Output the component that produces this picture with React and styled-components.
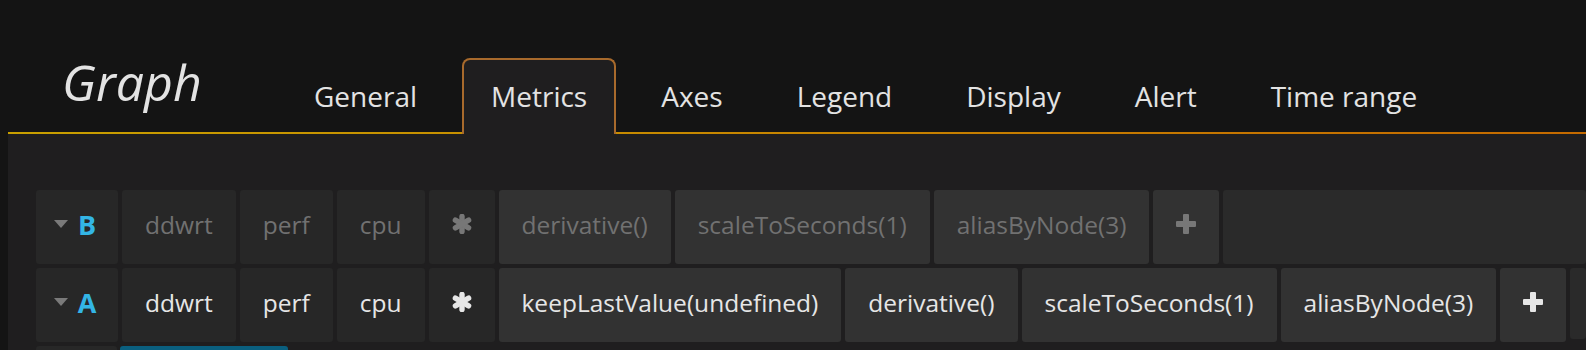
import React from "react";
import styled, { createGlobalStyle, css } from "styled-components";

const GlobalStyle = createGlobalStyle`
  html, body {
    margin: 0;
    padding: 0;
    overflow: hidden;
    background: #141414;
  }
  body {
    font-family: "Open Sans", "Liberation Sans", sans-serif;
  }
`;

const Page = styled.div`
  height: 100vh;
  overflow: hidden;
  padding-left: 8px;
  box-sizing: border-box;
  background: #141414;
`;

const Header = styled.div`
  display: flex;
  align-items: flex-end;
  height: 134px;
  background: linear-gradient(to right, #c9a000, #c46a00) left bottom / 100% 2px no-repeat;
`;

const Title = styled.div`
  flex: 0 0 269px;
  box-sizing: border-box;
  align-self: flex-start;
  margin-top: 48px;
  padding-left: 54px;
  font-size: 50px;
  font-style: italic;
  color: #e3e3e3;
  line-height: normal;
`;

const Tabs = styled.div`
  display: flex;
  align-items: flex-end;
`;

const Tab = styled.div`
  box-sizing: border-box;
  height: 74px;
  margin: 0 8px 2px;
  padding: 17px 27px 0;
  border: 2px solid transparent;
  border-bottom: 0;
  border-radius: 8px 8px 0 0;
  font-size: 28px;
  line-height: 38px;
  color: #e3e3e3;
  white-space: nowrap;

  ${({ $active }) =>
    $active &&
    css`
      height: 76px;
      margin-bottom: 0;
      border-color: #a86a2c;
      background: #1f1e1f;
    `}
`;

const Panel = styled.div`
  background: #1f1e1f;
  padding: 56px 0 0 28px;
  min-height: 260px;
  overflow: hidden;
`;

const Row = styled.div`
  display: flex;
  gap: ${({ $gap }) => $gap || 4}px;
  height: 74px;
  margin-bottom: 4px;
`;

const Cell = styled.div`
  flex-shrink: 0;
  box-sizing: border-box;
  display: flex;
  align-items: center;
  justify-content: center;
  height: 100%;
  padding: 0 23px 6px;
  border-radius: 3px;
  background: ${({ $func }) => ($func ? "#323232" : "#272727")};
  color: ${({ $dim }) => ($dim ? "#717171" : "#e6e6e6")};
  font-size: 24.5px;
  line-height: normal;
  white-space: nowrap;
`;

const RefCell = styled.div`
  flex: 0 0 ${({ $w }) => $w || 82}px;
  box-sizing: border-box;
  display: flex;
  align-items: center;
  height: 100%;
  padding: 0 0 6px 18px;
  border-radius: 3px;
  background: #272727;
`;

const RefLetter = styled.span`
  width: 20px;
  margin-left: 9px;
  text-align: center;
  font-size: 27px;
  font-weight: 700;
  color: #33b5e5;
  line-height: normal;
`;

const Filler = styled.div`
  flex: 1 1 auto;
  min-width: 0;
  height: ${({ $short }) => ($short ? "71px" : "100%")};
  border-radius: 3px;
  background: #2a2a2a;
`;

const AddButton = styled.div`
  flex: 0 0 168px;
  height: 100%;
  border-radius: 3px;
  background: #0a5f7f;
`;

const Caret = () => (
  <svg width="14" height="8" viewBox="0 0 14 8">
    <polygon points="0,0 14,0 7,8" fill="#7a7a7a" />
  </svg>
);

const Asterisk = ({ color }) => (
  <svg width="20" height="20" viewBox="-10 -10 20 20">
    {[90, 30, 150].map((a) => (
      <line
        key={a}
        x1={-7.6 * Math.cos((a * Math.PI) / 180)}
        y1={-7.6 * Math.sin((a * Math.PI) / 180)}
        x2={7.6 * Math.cos((a * Math.PI) / 180)}
        y2={7.6 * Math.sin((a * Math.PI) / 180)}
        stroke={color}
        strokeWidth="5.4"
        strokeLinecap="round"
      />
    ))}
  </svg>
);

const Plus = ({ color }) => (
  <svg width="20" height="20" viewBox="0 0 20 20">
    <rect x="7" y="0" width="6" height="20" rx="1" fill={color} />
    <rect x="0" y="7" width="20" height="6" rx="1" fill={color} />
  </svg>
);

const tabs = ["General", "Metrics", "Axes", "Legend", "Display", "Alert", "Time range"];

const queries = [
  {
    id: "B",
    dim: true,
    segments: ["ddwrt", "perf", "cpu"],
    funcs: ["derivative()", "scaleToSeconds(1)", "aliasByNode(3)"],
  },
  {
    id: "A",
    dim: false,
    segments: ["ddwrt", "perf", "cpu"],
    funcs: ["keepLastValue(undefined)", "derivative()", "scaleToSeconds(1)", "aliasByNode(3)"],
  },
];

const QueryRow = ({ query }) => {
  const iconColor = query.dim ? "#777777" : "#e6e6e6";
  return (
    <Row>
      <RefCell>
        <Caret />
        <RefLetter>{query.id}</RefLetter>
      </RefCell>
      {query.segments.map((s) => (
        <Cell key={s} $dim={query.dim}>
          {s}
        </Cell>
      ))}
      <Cell $dim={query.dim}>
        <Asterisk color={iconColor} />
      </Cell>
      {query.funcs.map((f) => (
        <Cell key={f} $func $dim={query.dim}>
          {f}
        </Cell>
      ))}
      <Cell $func $dim={query.dim}>
        <Plus color={iconColor} />
      </Cell>
      <Filler $short={!query.dim} />
    </Row>
  );
};

export default function App() {
  return (
    <>
      <GlobalStyle />
      <Page>
        <Header>
          <Title>Graph</Title>
          <Tabs>
            {tabs.map((t) => (
              <Tab key={t} $active={t === "Metrics"}>
                {t}
              </Tab>
            ))}
          </Tabs>
        </Header>
        <Panel>
          {queries.map((q) => (
            <QueryRow key={q.id} query={q} />
          ))}
          <Row $gap={3}>
            <RefCell $w={81} />
            <AddButton />
          </Row>
        </Panel>
      </Page>
    </>
  );
}
